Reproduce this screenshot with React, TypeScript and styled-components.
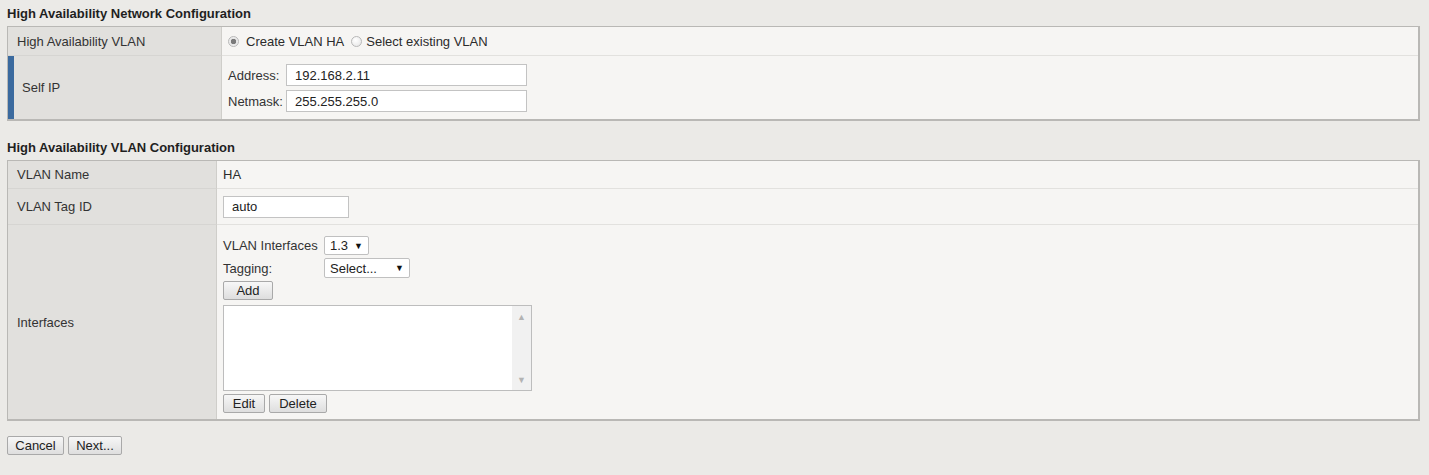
import React from 'react'
import styled, { createGlobalStyle } from 'styled-components'

const GlobalStyle = createGlobalStyle`
  body {
    margin: 0;
    background: #ebeae7;
    font-family: 'Liberation Sans', Arial, sans-serif;
    font-size: 13px;
    color: #2b2b2b;
  }
`

const Page = styled.div`
  padding: 7px 9px 20px 7px;
`

const SectionTitle = styled.div`
  font-weight: bold;
  font-size: 13px;
  line-height: 14px;
  color: #1f1f1f;
  margin-bottom: 5px;
`

const Table = styled.div<{ $labelWidth: number; $rows: string; $gap?: number }>`
  display: grid;
  grid-template-columns: ${({ $labelWidth }) => $labelWidth}px 1fr;
  grid-template-rows: ${({ $rows }) => $rows};
  border: 1px solid #b9b8b5;
  border-right-width: 2px;
  border-bottom-width: 2px;
  background: #f6f5f3;
  margin-bottom: ${({ $gap }) => $gap ?? 0}px;
`

const LabelCell = styled.div<{ $marked?: boolean; $last?: boolean }>`
  display: flex;
  align-items: center;
  background: #e1e0dd;
  border-right: 1px solid #cfceca;
  border-bottom: ${({ $last }) => ($last ? 'none' : '1px solid #d6d5d2')};
  border-left: ${({ $marked }) => ($marked ? '6px solid #3b6a9e' : 'none')};
  padding-left: ${({ $marked }) => ($marked ? 8 : 9)}px;
  color: #333;
`

const ValueCell = styled.div<{ $last?: boolean; $align?: string; $pad?: string }>`
  display: flex;
  flex-direction: column;
  justify-content: ${({ $align }) => $align ?? 'center'};
  padding: ${({ $pad }) => $pad ?? '0 0 0 6px'};
  border-bottom: ${({ $last }) => ($last ? 'none' : '1px solid #e2e1de')};
  color: #2b2b2b;
`

const RadioRow = styled.div`
  display: flex;
  align-items: center;
`

const Radio = styled.span<{ $checked?: boolean; $before: number; $after: number }>`
  display: inline-block;
  width: 11px;
  height: 11px;
  margin: 0 ${({ $after }) => $after}px 0 ${({ $before }) => $before}px;
  border-radius: 50%;
  border: 1px solid #b8b8b8;
  box-sizing: border-box;
  background: ${({ $checked }) =>
    $checked
      ? 'radial-gradient(circle, #7a7a7a 0 2.5px, #e6e6e6 3px, #f7f7f7 100%)'
      : 'radial-gradient(circle at 40% 35%, #ffffff, #e3e3e3)'};
`

const FieldGrid = styled.div`
  display: grid;
  grid-template-columns: 58px 241px;
  row-gap: 4px;
  align-items: center;
  padding-left: 6px;
`

const FieldLabel = styled.span`
  color: #333;
`

const TextBox = styled.div<{ $width?: number }>`
  width: ${({ $width }) => ($width ? `${$width}px` : 'auto')};
  height: 22px;
  box-sizing: border-box;
  background: #fff;
  border: 1px solid #c3c3c3;
  padding-left: 8px;
  display: flex;
  align-items: center;
  color: #222;
`

const InlineRow = styled.div`
  display: flex;
  align-items: center;
`

const FixedLabel = styled.span<{ $width: number }>`
  display: inline-block;
  width: ${({ $width }) => $width}px;
  color: #333;
`

const DropDown = styled.div<{ $width: number; $height: number }>`
  width: ${({ $width }) => $width}px;
  height: ${({ $height }) => $height}px;
  box-sizing: border-box;
  background: #fff;
  border: 1px solid #c0c0c0;
  border-radius: 2px;
  display: flex;
  align-items: center;
  justify-content: space-between;
  padding: 0 5px 0 5px;
  color: #222;
`

const Arrow = styled.span`
  font-size: 9px;
  color: #111;
`

const Button = styled.button<{ $width: number }>`
  width: ${({ $width }) => $width}px;
  height: 19px;
  padding: 0;
  font-family: 'Liberation Sans', Arial, sans-serif;
  font-size: 13px;
  color: #222;
  background: linear-gradient(#f7f7f7, #dedede);
  border: 1px solid #a9a9a9;
  border-radius: 2px;
`

const ButtonRow = styled.div<{ $top?: number }>`
  display: flex;
  gap: 4px;
  margin-top: ${({ $top }) => $top ?? 0}px;
`

const ListBox = styled.div`
  width: 309px;
  height: 86px;
  box-sizing: border-box;
  background: #fff;
  border: 1px solid #bdbdbd;
  display: flex;
  justify-content: flex-end;
  margin-top: 5px;
`

const ScrollTrack = styled.div`
  width: 19px;
  background: #f1f1f1;
  display: flex;
  flex-direction: column;
  justify-content: space-between;
  align-items: center;
  padding: 6px 0 5px;
  color: #b3b3b3;
  font-size: 9px;
`

const InterfacesBlock = styled.div`
  display: flex;
  flex-direction: column;
  gap: 3px;
  padding-top: 11px;
`

export default function App() {
  return (
    <>
      <GlobalStyle />
      <Page>
        <SectionTitle>High Availability Network Configuration</SectionTitle>
        <Table $labelWidth={214} $rows="29px 63px" $gap={20}>
          <LabelCell>High Availability VLAN</LabelCell>
          <ValueCell>
            <RadioRow>
              <Radio $checked $before={0} $after={7} />
              <span>Create VLAN HA</span>
              <Radio $before={7} $after={4} />
              <span>Select existing VLAN</span>
            </RadioRow>
          </ValueCell>
          <LabelCell $marked $last>
            Self IP
          </LabelCell>
          <ValueCell $last $align="flex-start" $pad="8px 0 0 0">
            <FieldGrid>
              <FieldLabel>Address:</FieldLabel>
              <TextBox>192.168.2.11</TextBox>
              <FieldLabel>Netmask:</FieldLabel>
              <TextBox>255.255.255.0</TextBox>
            </FieldGrid>
          </ValueCell>
        </Table>

        <SectionTitle>High Availability VLAN Configuration</SectionTitle>
        <Table $labelWidth={209} $rows="28px 36px 194px">
          <LabelCell>VLAN Name</LabelCell>
          <ValueCell>HA</ValueCell>
          <LabelCell>VLAN Tag ID</LabelCell>
          <ValueCell>
            <TextBox $width={126}>auto</TextBox>
          </ValueCell>
          <LabelCell $last>Interfaces</LabelCell>
          <ValueCell $last $align="flex-start" $pad="0 0 0 6px">
            <InterfacesBlock>
              <InlineRow>
                <FixedLabel $width={101}>VLAN Interfaces</FixedLabel>
                <DropDown $width={45} $height={19}>
                  1.3 <Arrow>▼</Arrow>
                </DropDown>
              </InlineRow>
              <InlineRow>
                <FixedLabel $width={101}>Tagging:</FixedLabel>
                <DropDown $width={86} $height={20}>
                  Select... <Arrow>▼</Arrow>
                </DropDown>
              </InlineRow>
              <ButtonRow>
                <Button $width={50}>Add</Button>
              </ButtonRow>
            </InterfacesBlock>
            <ListBox>
              <ScrollTrack>
                <span>▲</span>
                <span>▼</span>
              </ScrollTrack>
            </ListBox>
            <ButtonRow $top={3}>
              <Button $width={42}>Edit</Button>
              <Button $width={58}>Delete</Button>
            </ButtonRow>
          </ValueCell>
        </Table>

        <ButtonRow $top={15}>
          <Button $width={57}>Cancel</Button>
          <Button $width={54}>Next...</Button>
        </ButtonRow>
      </Page>
    </>
  )
}
